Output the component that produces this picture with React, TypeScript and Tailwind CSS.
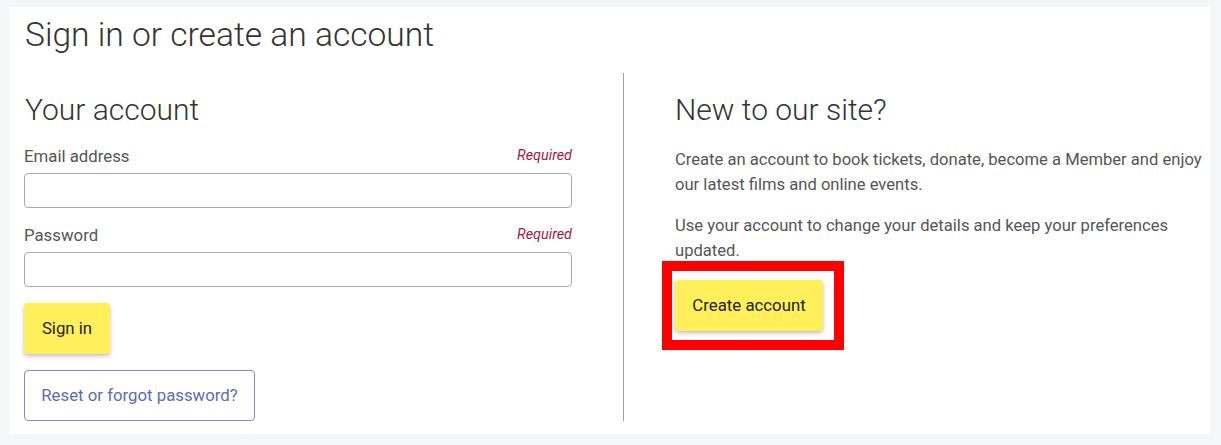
import { useState } from "react";

const font = { fontFamily: "Roboto, 'Noto Sans', sans-serif" };

function Field({ label, type }: { label: string; type: string }) {
  const [value, setValue] = useState("");
  return (
    <div className="flex flex-col">
      <div className="flex items-end justify-between h-5">
        <label className="text-[16.8px] leading-5 text-[#555]">{label}</label>
        <span className="text-[14.4px] leading-5 italic text-[#a3193f]">Required</span>
      </div>
      <input
        type={type}
        value={value}
        onChange={(e) => setValue(e.target.value)}
        className="mt-[7px] h-[35px] w-full rounded-[4px] border border-[#a9a9a9] bg-white px-3 text-[16.8px] outline-none"
      />
    </div>
  );
}

export default function App() {
  return (
    <div className="min-h-[445px] bg-[#f5f6f8] pt-[7px] pl-[9px] pr-[11px]" style={font}>
      <div className="bg-white pb-[13px] pl-[15px]">
        {/* page title */}
        <h1 className="pt-[8px] pl-[1px] text-[33.6px] leading-[40px] font-light text-[#333]">
          Sign in or create an account
        </h1>

        <div className="mt-[18px] flex">
          {/* sign in */}
          <div className="w-[548px] shrink-0">
            <h2 className="mt-[20px] pl-[1px] text-[30px] leading-[34px] font-light text-[#333]">
              Your account
            </h2>
            <div className="mt-[19px]">
              <Field label="Email address" type="email" />
            </div>
            <div className="mt-[17px]">
              <Field label="Password" type="password" />
            </div>
            <button className="mt-[16px] block h-[51px] w-[86px] rounded-[4px] bg-[#ffef5a] text-[16.8px] text-[#222] shadow-[0_2px_4px_rgba(0,0,0,0.25)]">
              Sign in
            </button>
            <button className="mt-[16px] block h-[51px] w-[231px] rounded-[4px] border border-[#7f8cc8] bg-white text-[16.8px] text-[#5d6bb5]">
              Reset or forgot password?
            </button>
          </div>

          <div className="ml-[51px] w-px shrink-0 bg-[#a0a0a0]" />

          {/* new account */}
          <div className="flex-1 pl-[51px]">
            <h2 className="mt-[20px] text-[30px] leading-[34px] font-light text-[#333]">
              New to our site?
            </h2>
            <p className="mt-[20px] text-[16.6px] leading-[25px] text-[#555]">
              Create an account to book tickets, donate, become a Member and enjoy our latest films and online events.
            </p>
            <p className="mt-[16px] text-[16.6px] leading-[25px] text-[#555]">
              Use your account to change your details and keep your preferences updated.
            </p>
            <div className="relative mt-[17px] w-[148px]">
              <button className="block h-[51px] w-[148px] rounded-[4px] bg-[#ffef5a] text-[16.8px] text-[#222] shadow-[0_2px_4px_rgba(0,0,0,0.25)]">
                Create account
              </button>
              <div className="pointer-events-none absolute left-[-13px] top-[-19px] h-[89px] w-[182px] border-[10px] border-[#ff0000]" />
            </div>
          </div>
        </div>
      </div>
    </div>
  );
}
